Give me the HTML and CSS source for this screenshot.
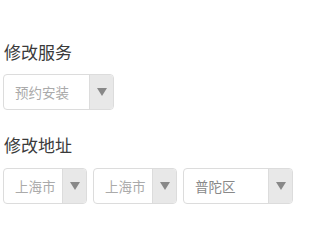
FILE: index.html
```html
<!DOCTYPE html>
<html>
<head>
<meta charset="utf-8">
<link rel="stylesheet" href="styles.css">
</head>
<body>
<div class="page">
  <div class="section">
    <div class="title">修改服务</div>
    <div class="row">
      <div class="select w-service"><span class="val">预约安装</span><span class="arrow"><i class="tri"></i></span></div>
    </div>
  </div>
  <div class="section addr">
    <div class="title">修改地址</div>
    <div class="row">
      <div class="select w-city"><span class="val">上海市</span><span class="arrow"><i class="tri"></i></span></div>
      <div class="select w-city"><span class="val">上海市</span><span class="arrow"><i class="tri"></i></span></div>
      <div class="select w-dist"><span class="val dark">普陀区</span><span class="arrow"><i class="tri"></i></span></div>
    </div>
  </div>
</div>
</body>
</html>
```
FILE: styles.css
```css
html, body { margin: 0; padding: 0; background: #fff; }
body { font-family: "Noto Sans CJK SC", "Noto Sans", sans-serif; }
.page { padding: 40px 3px 0 3px; display: flex; flex-direction: column; gap: 23px; }
.title { font-size: 17px; color: #3a3a3a; line-height: 24px; margin-bottom: 10px; padding-left: 1px; }
.addr .title { margin-bottom: 11px; }
.row { display: flex; gap: 6px; }
.select { display: flex; height: 36px; box-sizing: border-box; border: 1px solid #dcdcdc; border-radius: 4px; overflow: hidden; background: #fff; }
.w-service { width: 111px; }
.w-city { width: 84px; }
.w-dist { width: 110px; }
.val { flex: 1; display: flex; align-items: center; padding-left: 11px; font-size: 13.5px; color: #aaa; }
.val.dark { color: #888; }
.arrow { width: 23px; background: #e8e8e8; border-left: 1px solid #dcdcdc; display: flex; align-items: center; justify-content: center; }
.tri { width: 0; height: 0; border-left: 5px solid transparent; border-right: 5px solid transparent; border-top: 8px solid #888; }
```
